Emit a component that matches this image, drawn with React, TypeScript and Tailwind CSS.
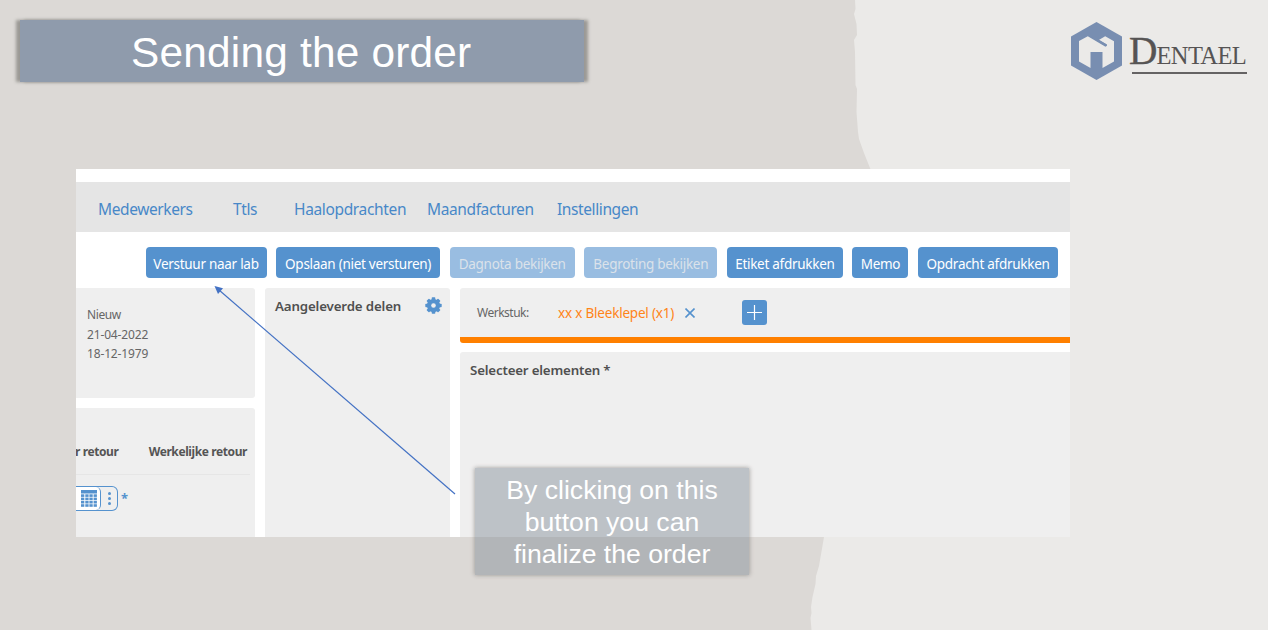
import type { ReactNode } from "react";

const navItems = [
  { label: "Medewerkers", cls: "w-[135px] tracking-[-0.4px]" },
  { label: "Ttls", cls: "w-[61px] tracking-[-0.4px]" },
  { label: "Haalopdrachten", cls: "w-[133px] tracking-[-0.35px]" },
  { label: "Maandfacturen", cls: "w-[130px] tracking-[-0.38px]" },
  { label: "Instellingen", cls: "w-[100px] tracking-[-0.4px]" },
];

const actions = [
  { label: "Verstuur naar lab", cls: "w-[121px] bg-[#5592ce] text-white" },
  { label: "Opslaan (niet versturen)", cls: "w-[164px] bg-[#5592ce] text-white" },
  { label: "Dagnota bekijken", cls: "w-[125px] bg-[#99bde1] text-[#dbe2ea]" },
  { label: "Begroting bekijken", cls: "w-[133px] bg-[#99bde1] text-[#dbe2ea]" },
  { label: "Etiket afdrukken", cls: "w-[116px] bg-[#5592ce] text-white" },
  { label: "Memo", cls: "w-[56px] bg-[#5592ce] text-white" },
  { label: "Opdracht afdrukken", cls: "w-[140px] bg-[#5592ce] text-white" },
];

function Backdrop() {
  return (
    <svg className="absolute inset-0" width="1268" height="630" viewBox="0 0 1268 630">
      <path
        fill="#ebeae8"
        d="M855 0L855.500 9L854 14L856.500 24L857 35L854 40L855 52L855.500 85L857 89L856.500 112L858 132L859 139L864 153L870 168L900 240L880 360L824 537L819 566L816 576L815.500 584L812.500 597L811 607L811.500 613L810.500 618L811.500 630H1268V0Z"
      />
    </svg>
  );
}

function Logo() {
  return (
    <div className="flex pt-[22px]">
      <svg width="51" height="58" viewBox="0 0 51 58">
        <path fill="#788eb1" d="M25.500 0L51 14.500V43.500L25.500 58L0 43.500V14.500Z" />
        <path
          fill="#ebeae8"
          d="M8 19L16.800 14.300L34.500 24.800L36 23.600L35.500 22.200L27.800 18L34.200 14.300L43 19.200V39.500L31.500 46V30H19.500V46L8 39.500Z"
        />
        <path d="M26 17.500L35.600 23.400" stroke="#788eb1" strokeWidth="1.800" />
      </svg>
      <div className="ml-[7px] mt-[8px] w-[118px]">
        <div className="flex h-[41px] items-baseline font-['Liberation_Serif',serif] leading-[41px] whitespace-nowrap text-[#565454]">
          <span className="w-[27.500px] text-[41px]">
            <span className="inline-block origin-left scale-x-[0.96] [-webkit-text-stroke:0.4px_#565454]">D</span>
          </span>
          <span className="text-[24.500px] tracking-[-0.6px]">ENTAEL</span>
        </div>
        <div className="ml-[3px] mt-px h-[2px] w-[115px] bg-[#656363]" />
      </div>
    </div>
  );
}

function Gear() {
  return (
    <svg width="17" height="17" viewBox="0 0 17 17">
      <g fill="#5592ce">
        <circle cx="8.500" cy="8.500" r="6.600" />
        {[0, 45, 90, 135, 180, 225, 270, 315].map((a) => (
          <rect key={a} x="6.700" y="0.300" width="3.600" height="4" rx="0.700" transform={`rotate(${a} 8.500 8.500)`} />
        ))}
      </g>
      <circle cx="8.500" cy="8.500" r="2.300" fill="#efefef" />
    </svg>
  );
}

function CalendarIcon() {
  return (
    <svg width="16" height="17" viewBox="0 0 16 17" fill="#5592ce">
      <rect width="16" height="3.500" />
      {[4.3, 7.6, 10.9, 14.2].map((y) =>
        [0, 4.3, 8.4, 12.6].map((x) => <rect key={`${x}-${y}`} x={x} y={y} width="3.300" height="2.600" />)
      )}
    </svg>
  );
}

function Card({ className, children }: { className: string; children?: ReactNode }) {
  return <section className={`bg-[#efefef] ${className}`}>{children}</section>;
}

function AppPanel() {
  return (
    <div className="relative ml-[76px] flex h-[368px] w-[994px] flex-col overflow-hidden bg-white pt-[13px] font-['Noto_Sans',sans-serif]">
      <nav className="flex h-[50px] shrink-0 items-center bg-[#e5e5e5] pl-[22px] pt-[5px] text-[15.500px] whitespace-nowrap text-[#4888c8]">
        {navItems.map((n) => (
          <span key={n.label} className={`shrink-0 ${n.cls}`}>{n.label}</span>
        ))}
      </nav>
      <div className="mt-[15px] flex h-[31px] shrink-0 gap-[9.600px] pl-[69.500px]">
        {actions.map((a) => (
          <button
            key={a.label}
            className={`flex shrink-0 items-center justify-center rounded-[4px] pt-[3px] text-[13.500px] tracking-[-0.28px] whitespace-nowrap ${a.cls}`}
          >
            {a.label}
          </button>
        ))}
      </div>
      <div className="mt-[10px] flex flex-1 gap-[10px]">
        <div className="flex w-[179px] flex-col gap-[10px]">
          <Card className="h-[110px] rounded-r-[3px] pl-[11px] pt-[17px] text-[12px] leading-[19.500px] text-[#666]">
            <p className="tracking-[-0.4px]">Nieuw</p>
            <p className="tracking-[-0.15px]">21-04-2022</p>
            <p className="tracking-[-0.15px]">18-12-1979</p>
          </Card>
          <Card className="flex-1 rounded-tr-[3px] pt-[34px]">
            <div className="mr-[5px] flex h-[33px] justify-between border-b border-[#e6e6e6] pr-[3px] text-[12px] leading-[20px] font-bold whitespace-nowrap text-[#555]">
              <span className="-ml-px tracking-[-0.4px]">r retour</span>
              <span className="tracking-[-0.4px]">Werkelijke retour</span>
            </div>
            <div className="mt-[11px] flex">
              <div className="flex h-[25px] w-[42px] rounded-r-[6px] border border-l-0 border-[#5592ce]">
                <div className="flex w-[25px] items-center rounded-r-[5px] border-r border-[#5592ce] bg-white pl-[5px]">
                  <CalendarIcon />
                </div>
                <div className="flex flex-1 flex-col items-center justify-center gap-[2px]">
                  <i className="size-[3px] rounded-full bg-[#5592ce]" />
                  <i className="size-[3px] rounded-full bg-[#5592ce]" />
                  <i className="size-[3px] rounded-full bg-[#5592ce]" />
                </div>
              </div>
              <span className="ml-[3px] text-[13px] leading-[25px] font-bold text-[#5592ce]">*</span>
            </div>
          </Card>
        </div>
        <Card className="flex w-[185px] justify-between rounded-t-[3px] pl-[10px] pr-[8px] pt-[9px]">
          <h2 className="text-[13.300px] leading-[19px] font-semibold tracking-[-0.15px] whitespace-nowrap text-[#505050]">Aangeleverde delen</h2>
          <Gear />
        </Card>
        <div className="flex flex-1 flex-col gap-[9px]">
          <Card className="flex h-[55px] items-center rounded-l-[3px] border-b-[6px] border-[#ff8000] pl-[17px] whitespace-nowrap">
            <span className="w-[81px] text-[12px] tracking-[-0.5px] text-[#666]">Werkstuk:</span>
            <span className="w-[127px] pt-px text-[13.500px] tracking-[-0.2px] text-[#ff8418]">xx x Bleeklepel (x1)</span>
            <svg width="10" height="10" viewBox="0 0 10 10" stroke="#5592ce" strokeWidth="1.600">
              <path d="M0.500 0.500L9.500 9.500M9.500 0.500L0.500 9.500" />
            </svg>
            <button className="mb-px ml-[47px] flex size-[25px] items-center justify-center rounded-[3px] bg-[#5592ce]">
              <svg width="15" height="15" viewBox="0 0 15 15" stroke="#fff" strokeWidth="1.200">
                <path d="M7.500 0V15M0 7.500H15" />
              </svg>
            </button>
          </Card>
          <Card className="flex-1 rounded-tl-[3px] pl-[10px] pt-[9px]">
            <h2 className="text-[13.300px] leading-[19px] font-semibold tracking-[-0.18px] text-[#505050]">Selecteer elementen *</h2>
          </Card>
        </div>
      </div>
    </div>
  );
}

export default function App() {
  return (
    <main className="relative h-[630px] w-[1268px] overflow-hidden bg-[#dcd9d6] font-['Liberation_Sans',sans-serif]">
      <Backdrop />
      <header className="relative flex h-[169px] items-start justify-between pl-[20px] pr-[21px]">
        <h1 className="mt-[20px] h-[62px] w-[564px] bg-[#8f9bac] pl-[111px] text-[42.400px] leading-[65px] tracking-[0.2px] whitespace-nowrap text-white shadow-[-4px_0_3px_#9b9995,4px_0_3px_#9b9995]">
          Sending the order
        </h1>
        <Logo />
      </header>
      <AppPanel />
      <svg className="absolute inset-0" width="1268" height="630" viewBox="0 0 1268 630">
        <path d="M219 290L455 494" stroke="#4472c4" strokeWidth="1.200" />
        <path d="M214.500 286L223 288.200L218 294Z" fill="#4472c4" />
      </svg>
      <aside className="absolute left-[475px] top-[468px] h-[107px] w-[274px] bg-[#768490]/42 pt-[6px] text-center text-[26.600px] leading-[32px] text-white shadow-[-1px_0_4px_#8b888377,1px_0_4px_#8b888377]">
        By clicking on this
        <br />
        button you can
        <br />
        finalize the order
      </aside>
    </main>
  );
}
